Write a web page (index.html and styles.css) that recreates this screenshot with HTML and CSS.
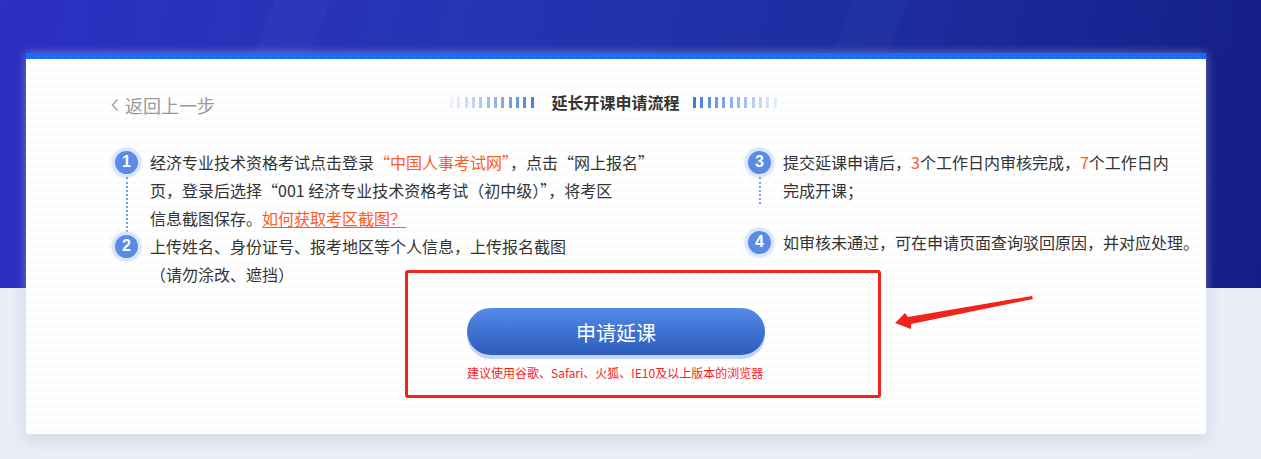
FILE: index.html
```html
<!DOCTYPE html>
<html lang="zh-CN">
<head>
<meta charset="utf-8">
<title>延长开课申请流程</title>
<link rel="stylesheet" href="styles.css">
</head>
<body>
<div class="page">
  <section class="card">
    <header class="card-head">
      <a class="back" href="#">
        <svg class="back-icon" width="8" height="14" viewBox="0 0 8 14"><path d="M6.5 1.5 L1.5 7 L6.5 12.5" fill="none" stroke="#9a9a9a" stroke-width="1.3"/></svg>
        <span>返回上一步</span>
      </a>
      <div class="title">
        <span class="bars bars-left"></span>
        <h1>延长开课申请流程</h1>
        <span class="bars bars-right"></span>
      </div>
      <span></span>
    </header>

    <div class="steps">
      <ol class="col">
        <li class="step">
          <div class="marker"><span class="num">1</span><span class="line"></span></div>
          <p class="text">经济专业技术资格考试点击登录<span class="hl">“中国人事考试网”</span>，点击“网上报名”<br>页，登录后选择“001 经济专业技术资格考试（初中级）”，将考区<br>信息截图保存。<a class="link" href="#">如何获取考区截图？</a></p>
        </li>
        <li class="step">
          <div class="marker"><span class="num">2</span></div>
          <p class="text">上传姓名、身份证号、报考地区等个人信息，上传报名截图<br>（请勿涂改、遮挡）</p>
        </li>
      </ol>
      <ol class="col col-right">
        <li class="step step-gap">
          <div class="marker"><span class="num">3</span><span class="line"></span></div>
          <p class="text">提交延课申请后，<span class="hl">3</span>个工作日内审核完成，<span class="hl">7</span>个工作日内<br>完成开课；</p>
        </li>
        <li class="step">
          <div class="marker"><span class="num">4</span></div>
          <p class="text">如审核未通过，可在申请页面查询驳回原因，并对应处理。</p>
        </li>
      </ol>
    </div>

    <div class="action">
      <div class="action-inner">
        <button class="apply" type="button">申请延课</button>
        <p class="tip">建议使用谷歌、Safari、火狐、IE10及以上版本的浏览器</p>
      </div>
    </div>

    <div class="mark-box"></div>
    <svg class="mark-arrow" width="145" height="40" viewBox="0 0 145 40">
      <polygon points="2,30 12,20 15,24 139,3 140,6 18,31 18,36" fill="#f2231b"/>
    </svg>
  </section>
</div>
</body>
</html>
```
FILE: styles.css
```css
* { box-sizing: border-box; }

html, body { margin: 0; padding: 0; }

body {
  font-family: "Noto Sans CJK SC", "Noto Sans", sans-serif;
  color: #333;
  height: 459px;
  overflow: hidden;
  background-color: #e9edf8;
  background-image:
    linear-gradient(112deg, transparent 0 20%, rgba(255,255,255,0.025) 20% 24%, transparent 24% 62%, rgba(255,255,255,0.02) 62% 66%, transparent 66%),
    linear-gradient(100deg, #2b2fc2 0%, #2535b4 35%, #1d2ea2 65%, #141e86 100%);
  background-size: 100% 288px, 100% 288px;
  background-repeat: no-repeat;
}

.page {
  padding: 53px 0 0 26px;
}

.card {
  position: relative;
  width: 1180px;
  height: 381px;
  border-top: 6px solid #196cfb;
  background-color: #fff;
  background-image: radial-gradient(circle at 4px 4px, #f4f4f4 0 1.1px, transparent 1.6px);
  background-size: 8px 8px;
  box-shadow: 0 0 10px rgba(255,255,255,0.35), 0 4px 14px rgba(40,60,120,0.16);
}

/* header */
.card-head {
  display: grid;
  grid-template-columns: 1fr auto 1fr;
  align-items: center;
  height: 52px;
  padding-top: 28px;
}

.back {
  display: flex;
  align-items: center;
  gap: 6px;
  padding-left: 85px;
  padding-top: 6px;
  color: #999;
  font-size: 18px;
  line-height: 24px;
  text-decoration: none;
}

.back-icon { display: block; }

.title {
  display: flex;
  align-items: center;
  gap: 13px;
  margin-left: -1px;
}

.title h1 {
  margin: 0;
  font-size: 16px;
  line-height: 24px;
  font-weight: 700;
  color: #333;
}

.bars {
  display: block;
  width: 88px;
  height: 11px;
  background: repeating-linear-gradient(90deg, #3e78dc 0 3px, transparent 3px 7.33px);
}
.bars-left {
  -webkit-mask-image: linear-gradient(90deg, rgba(0,0,0,0.08), #000);
  mask-image: linear-gradient(90deg, rgba(0,0,0,0.08), #000);
}
.bars-right {
  -webkit-mask-image: linear-gradient(270deg, rgba(0,0,0,0.08), #000);
  mask-image: linear-gradient(270deg, rgba(0,0,0,0.08), #000);
}

/* steps */
.steps {
  display: grid;
  grid-template-columns: 633px auto;
  padding-left: 86px;
  margin-top: 37px;
}

.col {
  list-style: none;
  margin: 0;
  padding: 0;
}

.step {
  display: flex;
  align-items: stretch;
  gap: 9px;
}

.step-gap { padding-bottom: 24px; }

.marker {
  display: flex;
  flex-direction: column;
  align-items: center;
  width: 29px;
  flex: none;
  margin-top: -0.5px;
}

.num {
  display: flex;
  align-items: center;
  justify-content: center;
  width: 29px;
  height: 29px;
  border-radius: 50%;
  border: 3px solid #dae5fb;
  background: #5a8ce6;
  color: #fff;
  font-family: "Liberation Sans", Arial, sans-serif;
  font-weight: 700;
  font-size: 16px;
  line-height: 1;
  box-shadow: 0 0 2px 1px rgba(215,228,250,0.7);
}

.line {
  flex: 1;
  width: 0;
  border-left: 2px dotted #76a0e8;
  margin-bottom: 0.5px;
}

.text {
  margin: 0;
  font-size: 16px;
  line-height: 28px;
  color: #333;
  white-space: nowrap;
}

.hl { color: #ff5a1f; }

.link {
  color: #ff5a1f;
  text-decoration: underline;
  text-underline-offset: 2px;
}

/* action */
.action {
  display: flex;
  justify-content: center;
  margin-top: 20px;
}

.action-inner {
  width: 298px;
}

.apply {
  display: block;
  width: 298px;
  height: 47px;
  border: 0;
  border-radius: 24px;
  background: linear-gradient(180deg, #548ae7 0%, #3f73d3 50%, #2e5dbc 100%);
  box-shadow: 0 4px 0 #c2d5f6;
  color: #fff;
  font-family: "Noto Sans CJK SC", sans-serif;
  font-size: 20px;
  line-height: 47px;
  cursor: pointer;
}

.tip {
  margin: 9px 0 0;
  font-size: 12px;
  line-height: 18px;
  color: #ff1a1a;
  white-space: nowrap;
}

/* annotations */
.mark-box {
  position: absolute;
  left: 379px;
  top: 211px;
  width: 476px;
  height: 128px;
  border: 3px solid #f2231b;
  border-radius: 3px;
}

.mark-arrow {
  position: absolute;
  left: 867px;
  top: 234px;
}
```
